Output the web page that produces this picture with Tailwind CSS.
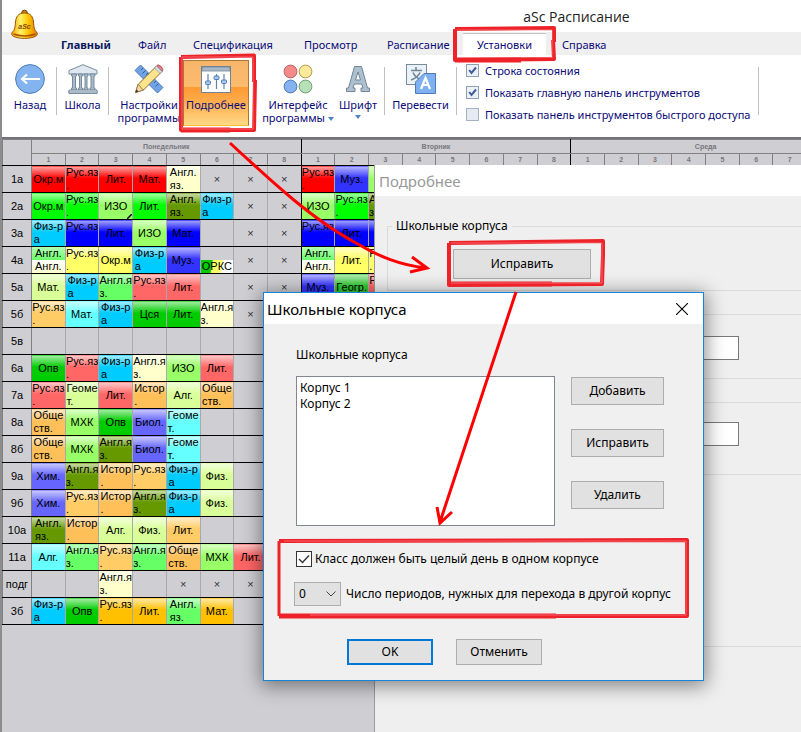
<!DOCTYPE html>
<html lang="ru">
<head>
<meta charset="utf-8">
<title>aSc Расписание</title>
<script src="https://cdn.jsdelivr.net/npm/@tailwindcss/browser@4"></script>
</head>
<body class="bg-[#cfced3]">
<div class="relative flex min-h-screen w-full flex-col overflow-hidden border-l-2 border-[#8c8c8c] bg-[#cfced3] font-['Noto_Sans','Open_Sans',sans-serif] text-[11px] leading-[13px] text-[#0a0a78]">

  <header class="bg-white">
    <div class="flex h-8 items-center justify-center pl-[350px] text-[14px] text-[#222] font-['Open_Sans',sans-serif]">aSc Расписание</div>
    <nav class="flex h-[23px] items-center bg-[#efefef] pt-px pl-[45px] font-['Noto_Sans',sans-serif]" aria-label="Вкладки">
      <a href="#" class="w-[91px] px-3.5 font-bold text-[#0a1a5c]">Главный</a>
      <a href="#" class="w-[39px]">Файл</a>
      <a href="#" class="w-[111px] px-4">Спецификация</a>
      <a href="#" class="w-[83px] px-4">Просмотр</a>
      <a href="#" class="w-[92px] px-4">Расписание</a>
      <a href="#" class="flex h-full w-[83px] items-center justify-center border-t border-[#c4c4c4] bg-white">Установки</a>
      <a href="#" class="px-4">Справка</a>
    </nav>

    <div class="flex h-[82px] items-start pt-[5px]">
      <button type="button" class="mt-1 flex w-[54px] flex-col items-center gap-1 whitespace-nowrap pl-0.5">
        <svg class="size-[30px]" viewBox="0 0 30 30" fill="none"><circle cx="15" cy="15" r="14.4" fill="#83b4ef" stroke="#4f7bb8"/><path d="M25 15H8M12 10.5 7 15l5 4.500" stroke="#fff" stroke-width="2.200"/></svg>
        <span>Назад</span>
      </button>
      <div class="mt-[7px] h-12 w-px bg-[#c0c0c0]"></div>
      <button type="button" class="mt-1 flex w-[51px] flex-col items-center gap-1 whitespace-nowrap">
        <svg class="h-[30px] w-8" viewBox="0 0 32 30" fill="#dfe8f0" stroke="#788c9e" stroke-width="1"><path d="M16 .7 30 6.500v3.500H2V6.500z"/><path d="M4.500 10h5v2h-1v12h1v2h-5v-2h1V12h-1zM11.500 10h4v2h-1v12h1v2h-4v-2h1V12h-1zM17 10h4v2h-1v12h1v2h-4v-2h1V12h-1zM23 10h5v2h-1v12h1v2h-5v-2h1V12h-1z" fill="#a9bbca"/><path d="M2 26h28v3.500H2zM1 28h30"/></svg>
        <span>Школа</span>
      </button>
      <div class="mt-[7px] h-12 w-px bg-[#c0c0c0]"></div>
      <button type="button" class="mt-1 flex w-[74px] flex-col items-center gap-1 whitespace-nowrap pl-1.5">
        <svg class="size-[30px]" viewBox="0 0 30 30"><path d="M6.500 1 29 23.500 23.500 29 1 6.500z" fill="#6fa3e6" stroke="#4f7bb8"/><path d="m9 4-2 2m4.500.5-3 3M14 9l-2 2m4.500.5-3 3M22 17l-2 2m4.500.5-3 3" stroke="#35629f" fill="none"/><path d="M4 20.500 22.500 2l5.500 5.500L9.500 26 1.500 28.500z" fill="#ffe48c" stroke="#806c3a"/><path d="M22.500 2 24 .8q4 1.200 5 5L28 7.500z" fill="#f07f88" stroke="#a4565c"/><path d="m20.500 4 5.500 5.500 2-2L22.500 2z" fill="#d8dfe6" stroke="#788c9e" stroke-width=".6"/><path d="m4 20.500 2 1.500 1 2 2.500 2-8 2.500z" fill="#f7d5a3" stroke="#806c3a" stroke-width=".7"/><path d="m2.500 25.500 2 2-3 1z" fill="#333"/></svg>
        <span class="text-center">Настройки<br>программы</span>
      </button>
      <button type="button" class="flex h-[66px] w-[66px] flex-col items-center gap-1 whitespace-nowrap border border-[#a87936] border-b-[#ffc02e] bg-[linear-gradient(#f7b56a_0,#fdbb6e_40%,#ff9a32_41%,#ffad4e_65%,#ffd987_100%)] pt-[5px]">
        <svg class="h-7 w-[30px]" viewBox="0 0 30 28"><rect x=".5" y=".5" width="29" height="26" fill="#fff" stroke="#708398"/><path d="M1 1h28v4H1z" fill="#a9b9c8" stroke="#708398" stroke-width=".8"/><path d="M7 8v15M15.500 8v15M23 8v15" stroke="#6685a3" stroke-width="1.200"/><g fill="#a6c7ef" stroke="#4f7bb8"><rect x="4.500" y="15" width="5" height="3.500" rx="1"/><rect x="13" y="10" width="5" height="3.500" rx="1"/><rect x="20.500" y="14" width="5" height="3.500" rx="1"/></g></svg>
        <span>Подробнее</span>
      </button>
      <button type="button" class="mt-1 ml-[7px] flex w-[84px] flex-col items-center gap-1 whitespace-nowrap">
        <svg class="size-[30px]" viewBox="0 0 30 30" stroke-width="1"><circle cx="7.500" cy="7.500" r="6.400" fill="#f58a8a" stroke="#c05f66"/><circle cx="22.500" cy="7.500" r="6.400" fill="#ffe99a" stroke="#b79c50"/><circle cx="7.500" cy="22.500" r="6.400" fill="#86b2f0" stroke="#4f7bb8"/><circle cx="22.500" cy="22.500" r="6.400" fill="#b8e0b8" stroke="#6ca274"/></svg>
        <span class="text-center">Интерфейс<br>программы <span class="inline-block border-x-[3px] border-t-4 border-x-transparent border-t-[#4f84c4] align-middle"></span></span>
      </button>
      <button type="button" class="mt-1 flex w-9 flex-col items-center gap-1 whitespace-nowrap">
        <svg class="h-[30px] w-6" viewBox="0 0 24 30"><path d="M8.500 2.500h7l6 21.500h2v3.500H15V24h2l-1.300-4H8.300L7 24h2v3.500H.5V24h2zM12 8 9.500 16h5z" fill="#aebfce" stroke="#71869a" fill-rule="evenodd"/></svg>
        <span class="flex flex-col items-center">Шрифт<span class="mt-1 block border-x-[3px] border-t-4 border-x-transparent border-t-[#4f84c4]"></span></span>
      </button>
      <div class="mt-[7px] ml-2 h-12 w-px bg-[#c0c0c0]"></div>
      <button type="button" class="mt-1 flex w-[71px] flex-col items-center gap-1 whitespace-nowrap">
        <svg class="size-[30px]" viewBox="0 0 30 30" fill="none"><rect x=".5" y=".5" width="20" height="20" fill="#eaf1f7" stroke="#788c9e"/><path d="M10 3v3M5 6.500h11M7 8.500q2 5 8.500 7.500M14 8.500q-2 5-9 7.500" stroke="#71869a" stroke-width="1.600"/><path d="M18 9.500h11.500v20H9.500V18z" fill="#7fb1f0" stroke="#4f7bb8"/><path d="m15 25 4.500-11 4.500 11m-7-4h5" stroke="#fff" stroke-width="2.200"/></svg>
        <span>Перевести</span>
      </button>
      <div class="mt-[7px] h-12 w-px bg-[#c0c0c0]"></div>
      <div class="flex flex-col gap-[9px] pt-1 pl-[9px]">
        <label class="flex items-center gap-1.5"><span class="relative flex size-[13px]"><input type="checkbox" checked class="peer size-[13px] appearance-none border border-[#8ea0b4] bg-[#edf1f6]"><svg class="pointer-events-none absolute inset-0 hidden peer-checked:block" viewBox="0 0 13 13"><path d="m3.200 6 2.300 3L10 3.500" fill="none" stroke="#3d5c99" stroke-width="2"/></svg></span>Строка состояния</label>
        <label class="flex items-center gap-1.5"><span class="relative flex size-[13px]"><input type="checkbox" checked class="peer size-[13px] appearance-none border border-[#8ea0b4] bg-[#edf1f6]"><svg class="pointer-events-none absolute inset-0 hidden peer-checked:block" viewBox="0 0 13 13"><path d="m3.200 6 2.300 3L10 3.500" fill="none" stroke="#3d5c99" stroke-width="2"/></svg></span>Показать главную панель инструментов</label>
        <label class="flex items-center gap-1.5"><input type="checkbox" class="size-[13px] appearance-none border border-[#a4b3c2] bg-[#e6ebf1]">Показать панель инструментов быстрого доступа</label>
      </div>
      <div class="mt-[7px] ml-2 h-12 w-px bg-[#c0c0c0]"></div>
    </div>
  </header>

  <svg class="absolute top-[9px] left-[9px] h-[31px] w-[27px]" viewBox="0 0 27 31" aria-label="aSc">
    <defs><linearGradient id="bell"><stop offset="0" stop-color="#ffa500"/><stop offset=".35" stop-color="#fff36a"/><stop offset=".65" stop-color="#ffc400"/><stop offset="1" stop-color="#e07a00"/></linearGradient></defs>
    <circle cx="13.500" cy="4" r="2.800" fill="#c98412" stroke="#6b3d08"/>
    <path d="M13.500 4C7 4 5 8 4.500 13S4 21 1.500 23c-1.500 1.600-.7 3.500 1 4.300 6 2.800 16 2.800 22 0 1.700-.8 2.500-2.700 1-4.300-2.500-2-2.500-5-3-10S20 4 13.500 4z" fill="url(#bell)" stroke="#9a5300"/>
    <path d="M2.500 25c6 2.500 16 2.500 22 0" fill="none" stroke="#b24e00" stroke-width="1.500"/>
    <text x="13.500" y="20" text-anchor="middle" font-family="Liberation Sans" font-size="7" font-weight="bold" font-style="italic" fill="#8a4300">aSc</text>
  </svg>

  <main class="border-t-2 border-[#727277]">
    <table class="w-[839px] table-fixed border-collapse font-['Liberation_Sans',Arial,sans-serif] text-[11px] leading-[13px] text-black">
      <colgroup id="cols"><col class="w-[29px]"></colgroup>
      <thead class="text-[7px] leading-[10px] text-[#77777c]" id="head"></thead>
      <tbody id="rows"></tbody>
    </table>
  </main>

  <section class="absolute top-[165px] right-0 bottom-0 left-[372px] flex flex-col border-l border-[#9b9b9f] bg-[#efefef] text-[12px] leading-4 text-black" aria-label="Подробнее">
    <h2 class="flex h-[31px] items-center bg-white pl-1 text-[15px] text-[#999]">Подробнее</h2>
    <div class="flex flex-col pt-[22px] pl-3">
      <fieldset class="h-[73px] border border-r-0 border-[#dadada] pl-[65px]">
        <legend class="-ml-[61px] px-1">Школьные корпуса</legend>
        <button type="button" class="mt-[15px] h-[30px] w-[138px] border border-[#adadad] bg-[#e1e1e1]">Исправить</button>
      </fieldset>
      <fieldset class="mt-[23px] h-[65px] border border-r-0 border-[#dadada] pt-[21px] pl-[200px]"><input type="text" aria-label="Значение" class="h-6 w-[151px] border border-[#7a7a7a] bg-white"></fieldset>
      <fieldset class="mt-[23px] h-[73px] border border-r-0 border-[#dadada] pt-[19px] pl-[200px]"><input type="text" aria-label="Значение" class="h-6 w-[151px] border border-[#7a7a7a] bg-white"></fieldset>
      <div class="mt-[171px] h-px bg-[#dadada]"></div>
    </div>
  </section>

  <section role="dialog" aria-label="Школьные корпуса" class="absolute top-[292px] left-[261px] flex w-[441px] flex-col border border-[#1883d7] bg-[#f0f0f0] text-[12px] leading-4 text-black shadow-[0_3px_18px_2px_rgba(0,0,0,0.45)]">
    <div class="flex h-[31px] items-center justify-between bg-white pr-[15px] pl-[3px]">
      <h2 class="text-[15px]">Школьные корпуса</h2>
      <button type="button" aria-label="Закрыть"><svg class="size-3" viewBox="0 0 12 12"><path d="m0 0 12 12M12 0 0 12" stroke="#000" stroke-width="1.100"/></svg></button>
    </div>
    <div class="flex flex-col px-8 pt-[23px] pb-[15px]">
      <label for="list">Школьные корпуса</label>
      <div class="mt-[13px] flex gap-4">
        <select id="list" size="2" class="h-[150px] w-[259px] appearance-none overflow-hidden border border-[#828790] bg-white pt-0.5">
          <option class="h-4 min-h-0 px-[3px] py-0 leading-4">Корпус 1</option>
          <option class="h-4 min-h-0 px-[3px] py-0 leading-4">Корпус 2</option>
        </select>
        <div class="flex flex-col gap-6 pt-px">
          <button type="button" class="h-7 w-[93px] border border-[#adadad] bg-[#e1e1e1]">Добавить</button>
          <button type="button" class="h-7 w-[93px] border border-[#adadad] bg-[#e1e1e1]">Исправить</button>
          <button type="button" class="h-7 w-[93px] border border-[#adadad] bg-[#e1e1e1]">Удалить</button>
        </div>
      </div>
      <label class="mt-[25px] flex items-center gap-[3px] whitespace-nowrap"><span class="relative flex size-4"><input type="checkbox" checked class="peer size-4 appearance-none border border-[#333] bg-white"><svg class="pointer-events-none absolute inset-0 hidden peer-checked:block" viewBox="0 0 16 16"><path d="m3 8 3.500 3.500L13 4.500" fill="none" stroke="#333" stroke-width="1.400"/></svg></span>Класс должен быть целый день в одном корпусе</label>
      <div class="mt-[15px] -ml-0.5 flex items-center gap-[5px] whitespace-nowrap">
        <span class="relative flex"><select id="periods" class="h-6 w-[47px] appearance-none border border-[#adadad] bg-[#e1e1e1] pl-1"><option>0</option><option>1</option></select><svg class="pointer-events-none absolute top-[9px] right-[5px] h-1.5 w-2.5" viewBox="0 0 10 6"><path d="m.5.5 4.500 4.500L9.500.5" fill="none" stroke="#444"/></svg></span>
        <label for="periods">Число периодов, нужных для перехода в другой корпус</label>
      </div>
      <div class="mt-[33px] flex gap-[23px] pl-[51px]">
        <button type="button" class="h-[26px] w-[86px] border-2 border-[#0078d7] bg-[#e1e1e1]">OK</button>
        <button type="button" class="h-[26px] w-[86px] border border-[#adadad] bg-[#e1e1e1]">Отменить</button>
      </div>
    </div>
  </section>

  <svg class="pointer-events-none absolute top-0 -left-0.5 h-[732px] w-[801px]" viewBox="0 0 801 732" fill="none" stroke="#ee2229" stroke-linejoin="round" aria-hidden="true">
    <g stroke-width="4">
      <path d="M181 57 254 55.500 254 82M255 80 254 130 181 130 181 57"/><path d="M181 130h49" stroke-width="5"/>
      <path d="M455 29 554 28 554 42M553 40 554 59 455 60 455 29"/><path d="M455 60h66" stroke-width="5"/>
      <path d="M449 243 603 241 603 256M603 255 602 284 449 285 449 243"/><path d="M449 284h103" stroke-width="5"/>
      <path d="M279 541 687 540 687 566M687 564 687 616 279 616" /><path d="M279 541v75" stroke-width="3"/><path d="M279 616h277" stroke-width="5"/>
    </g>
    <g stroke="#fff" stroke-opacity=".3" stroke-width="1"><path d="M182 57h71v72h-71zM457 30h95v28M451 243h151v40H451M284 541h402v74H310"/></g>
    <g stroke="#f00" stroke-width="3" stroke-linejoin="miter"><path d="M230 143C272 182 313 220 356 243 380 257 400 265 426 268M412 257 427 268 410 272"/><path d="M516 292 440 522M437 507 440 523 452 512"/></g>
  </svg>
</div>

<script>
const colours = {
  R:'#ff0000', G:'#00ff00', B:'#0000ff', L:'#99ff66', O:'#669900', C:'#00ccff', W:'#ffffcc', Y:'#ffff66',
  V:'#3333ff', M:'#66ff66', P:'#d9ff99', S:'#ff6666', N:'#ffcc66', A:'#66ffff', D:'#00cc00', E:'#ffc05a',
  U:'#6666ff', H:'#ffc000', F:'#33cc33'
};
// Each lesson is a colour key, a colon and its lines; "x" marks a blocked period.
const timetable = [
  ['1а','R:Окр.м,R:Рус.яз|.,R:Лит.,R:Мат.,W:Англ.|яз.,x,x,x,R:Рус.яз|.,V:Муз.,L:ИЗО'],
  ['2а','G:Окр.м,G:Рус.яз|.,L:ИЗО:mark,G:Лит.,O:Англ.|яз.,C:Физ-р|а,x,x,L:ИЗО,G:Рус.яз|.,O:Англ.я|з.'],
  ['3а','C:Физ-р|а,B:Рус.яз|.,B:Лит.,L:ИЗО,B:Мат.,,x,x,B:Рус.яз|.,B:Лит.,B:Мат.'],
  ['4а','split,Y:Рус.яз|.,Y:Окр.м,C:Физ-р|а,V:Муз.,orks,x,x,split,Y:Лит.,Y:Рус.яз|.'],
  ['5а','P:Мат.,C:Физ-р|а,M:Англ.я|з.,S:Рус.яз|.,S:Лит.,,x,x,V:Муз.,F:Геогр.,S:Рус.яз|.'],
  ['5б','N:Рус.яз|.,A:Мат.,C:Физ-р|а,D:Цся,D:Лит.,W:Англ.я|з.,x'],
  ['5в',''],
  ['6а','D:Опв,S:Рус.яз|.,C:Физ-р|а,W:Англ.я|з.,L:ИЗО,S:Лит.'],
  ['7а','S:Рус.яз|.,P:Геоме|т.,S:Лит.,E:Истор|.,P:Алг.,E:Обще|ств.'],
  ['8а','E:Обще|ств.,L:МХК,D:Опв,U:Биол.,A:Геоме|т.'],
  ['8б','E:Обще|ств.,L:МХК,O:Англ.я|з.,U:Биол.,A:Геоме|т.'],
  ['9а','U:Хим.,O:Англ.я|з.,E:Истор|.,N:Рус.яз|.,C:Физ-р|а,P:Физ.'],
  ['9б','U:Хим.,N:Рус.яз|.,E:Истор|.,O:Англ.я|з.,C:Физ-р|а,P:Физ.'],
  ['10а','O:Англ.|яз.,E:Истор|.,P:Алг.,P:Физ.,N:Лит.'],
  ['11а','A:Алг.,M:Англ.я|з.,N:Рус.яз|.,M:Англ.я|з.,E:Обще|ств.,L:МХК,S:Лит.'],
  ['подг',',,W:Англ.я|з.,,x,x,x'],
  ['3б','C:Физ-р|а,D:Опв,H:Рус.яз|.,H:Лит.,M:Англ.|яз.,H:Мат.']
];
const days = ['Понедельник','Вторник','Среда'];
let cols = '', dayCells = '', numbers = '';
days.forEach((day, d) => {
  dayCells += `<th colspan="8" class="h-3.5 border border-[#808085] border-r-black p-0">${day}</th>`;
  for (let n = 1; n <= 8; n++) {
    cols += '<col>';
    numbers += `<th class="h-3 border border-b-black p-0 ${n === 8 ? 'border-x-[#808085] border-r-black' : 'border-x-[#808085]'}">${n}</th>`;
  }
});
document.getElementById('cols').insertAdjacentHTML('beforeend', cols);
document.getElementById('head').innerHTML =
  `<tr><th rowspan="2" class="border border-[#808085] border-b-black p-0"></th>${dayCells}</tr><tr>${numbers}</tr>`;

function cell(item, i) {
  const edge = 'overflow-hidden border-r border-b border-b-black p-0 text-center whitespace-nowrap ' + (i % 8 === 7 ? 'border-r-black' : 'border-r-[#a9a9ad]');
  if (!item) return `<td class="${edge}"></td>`;
  if (item === 'x') return `<td class="${edge} text-[#333]">×</td>`;
  if (item === 'split') return `<td class="${edge}"><div class="bg-linear-to-b from-[#b3ffb3] to-[#66ff66]">Англ.</div><div class="bg-linear-to-b from-white to-[#ffffcc]">Англ.</div></td>`;
  if (item === 'orks') return `<td class="${edge} align-bottom"><div class="bg-[linear-gradient(100deg,#00cc00_33%,#ffff66_36%,#ffff66_60%,#ffffff_68%)]">ОРКС</div></td>`;
  const [key, text, mark] = item.split(':');
  const corner = mark ? '<svg class="absolute right-0 bottom-0 size-[5px]" viewBox="0 0 5 5"><path d="M0 5 5 0" stroke="#000" stroke-width="1.500"/></svg>' : '';
  return `<td class="${edge} relative bg-linear-to-b from-white/65 to-transparent to-45%" style="background-color:${colours[key]}"><div class="inline-block max-w-full text-left align-middle">${text.replace('|','<br>')}</div>${corner}</td>`;
}
document.getElementById('rows').innerHTML = timetable.map(([name, line]) => {
  const items = line.split(',');
  while (items.length < 24) items.push('');
  return `<tr class="h-[27px]"><th class="border border-[#808085] border-y-black p-0 font-normal">${name}</th>${items.map(cell).join('')}</tr>`;
}).join('');
</script>
</body>
</html>
